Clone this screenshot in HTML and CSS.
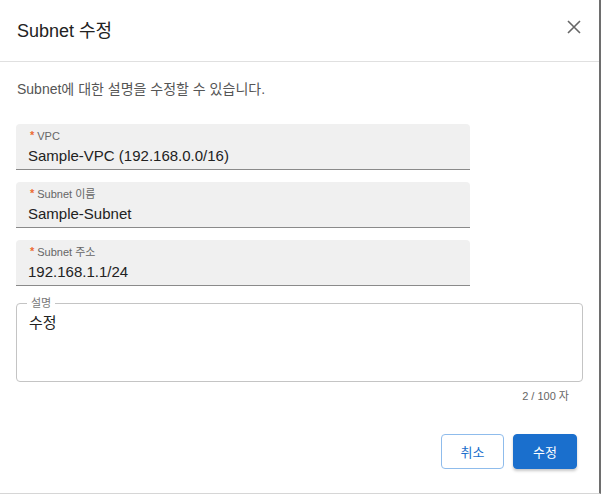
FILE: index.html
```html
<!DOCTYPE html>
<html lang="ko">
<head>
<meta charset="utf-8">
<title>Subnet 수정</title>
<link rel="stylesheet" href="styles.css">
</head>
<body>
<div class="dialog">
  <div class="header">
    <h2 class="title">Subnet 수정</h2>
    <button class="close" aria-label="닫기">
      <svg width="14" height="14" viewBox="0 0 14 14"><path d="M1 1L13 13M13 1L1 13" stroke="#666" stroke-width="1.6" fill="none"/></svg>
    </button>
  </div>
  <div class="content">
    <p class="desc">Subnet에 대한 설명을 수정할 수 있습니다.</p>
    <div class="fields">
      <div class="field">
        <div class="label"><span class="req">*</span>VPC</div>
        <div class="value">Sample-VPC (192.168.0.0/16)</div>
      </div>
      <div class="field">
        <div class="label"><span class="req">*</span>Subnet 이름</div>
        <div class="value">Sample-Subnet</div>
      </div>
      <div class="field">
        <div class="label"><span class="req">*</span>Subnet 주소</div>
        <div class="value">192.168.1.1/24</div>
      </div>
    </div>
    <div class="outlined">
      <span class="notch">설명</span>
      <div class="value">수정</div>
    </div>
    <div class="counter">2 / 100 자</div>
  </div>
  <div class="actions">
    <button class="btn btn-outline">취소</button>
    <button class="btn btn-primary">수정</button>
  </div>
</div>
</body>
</html>
```
FILE: styles.css
```css
html, body {
  margin: 0;
  padding: 0;
  background: #fff;
}
body {
  font-family: "Liberation Sans", "Noto Sans CJK KR", sans-serif;
  color: #222;
}
.dialog {
  width: 601px;
  height: 494px;
  box-sizing: border-box;
  border-right: 2px solid #6e6e6e;
  border-bottom: 1px solid #d6d6d6;
  display: flex;
  flex-direction: column;
  background: #fff;
}
.header {
  height: 62px;
  box-sizing: border-box;
  border-bottom: 1px solid #e0e0e0;
  display: flex;
  align-items: center;
  justify-content: space-between;
  padding: 0 17px 3px 17px;
}
.title {
  margin: 0;
  font-size: 18px;
  font-weight: 400;
  color: #222;
}
.close {
  border: 0;
  background: transparent;
  padding: 0;
  width: 16px;
  height: 16px;
  display: flex;
  align-items: center;
  justify-content: center;
  margin-top: -4px;
}
.content {
  padding: 17px 16px 0 16px;
  display: flex;
  flex-direction: column;
}
.desc {
  margin: 0;
  font-size: 14px;
  line-height: 20px;
  color: #555;
  padding-left: 1px;
}
.fields {
  margin-top: 25px;
  display: flex;
  flex-direction: column;
  gap: 12px;
  width: 454px;
}
.field {
  height: 46px;
  box-sizing: border-box;
  background: #f0f0f0;
  border-radius: 4px 4px 0 0;
  border-bottom: 1px solid #8a8a8a;
  padding: 6px 12px 0 12px;
}
.label {
  font-size: 11px;
  line-height: 13px;
  color: #666;
  display: flex;
  align-items: center;
}
.req {
  color: #ec6a30;
  font-size: 11px;
  margin: -2px 3px 0 2px;
  font-weight: 700;
}
.value {
  font-size: 15px;
  line-height: 20px;
  color: #222;
  margin-top: 3px;
}
.outlined {
  position: relative;
  margin-top: 17px;
  height: 79px;
  box-sizing: border-box;
  border: 1px solid #c4c4c4;
  border-radius: 4px;
  padding: 6px 12px;
}
.notch {
  position: absolute;
  top: -8px;
  left: 10px;
  padding: 0 4px;
  background: #fff;
  font-size: 11px;
  line-height: 14px;
  color: #777;
}
.counter {
  margin-top: 7px;
  text-align: right;
  padding-right: 14px;
  font-size: 11px;
  line-height: 14px;
  color: #666;
}
.actions {
  margin-top: 31px;
  display: flex;
  justify-content: flex-end;
  gap: 9px;
  padding-right: 22px;
}
.btn {
  height: 35px;
  width: 63px;
  box-sizing: border-box;
  border-radius: 4px;
  font-family: inherit;
  font-size: 13px;
  cursor: pointer;
}
.btn-outline {
  background: #fff;
  border: 1px solid #8fbcec;
  color: #1a6ecb;
}
.btn-primary {
  width: 64px;
  background: #1a6fcd;
  border: 1px solid #1a6fcd;
  color: #fff;
  box-shadow: 0 2px 3px rgba(0, 0, 0, 0.22);
}
```
